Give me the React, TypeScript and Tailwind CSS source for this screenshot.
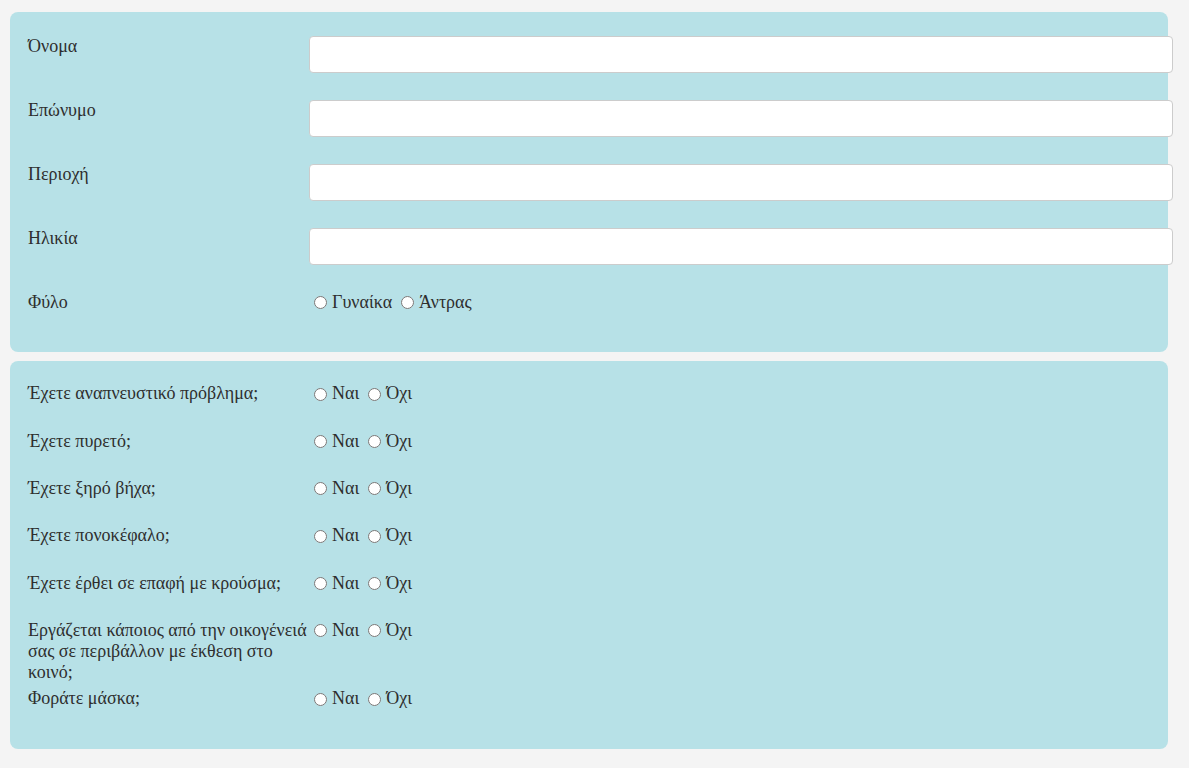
import React from "react";

const serif = { fontFamily: '"Liberation Serif", "Times New Roman", serif' };

function Radio({
  name,
  label,
  first,
}: {
  name: string;
  label: string;
  first?: boolean;
}) {
  return (
    <label className="inline-flex items-center">
      <input
        type="radio"
        name={name}
        className={
          (first ? "ml-[5px]" : "ml-[9px]") +
          " mt-[1px] h-[13px] w-[13px] shrink-0"
        }
      />
      <span className="ml-[5px]">{label}</span>
    </label>
  );
}

const textFields = ["Όνομα", "Επώνυμο", "Περιοχή", "Ηλικία"];

const questions = [
  "Έχετε αναπνευστικό πρόβλημα;",
  "Έχετε πυρετό;",
  "Έχετε ξηρό βήχα;",
  "Έχετε πονοκέφαλο;",
  "Έχετε έρθει σε επαφή με κρούσμα;",
  "Εργάζεται κάποιος από την οικογένειά σας σε περιβάλλον με έκθεση στο κοινό;",
  "Φοράτε μάσκα;",
];

export default function App() {
  return (
    <div
      className="min-h-[768px] w-full bg-[#f4f4f4] pt-[12px] text-[18px] leading-[1.15] text-[#2e2e2e]"
      style={serif}
    >
      {/* personal details */}
      <div className="ml-[10px] w-[1158px] rounded-[8px] bg-[#b7e1e7] pl-[18px] pt-[24px] pb-[39px]">
        {textFields.map((f) => (
          <div key={f} className="mb-[27px] flex items-start">
            <div className="w-[281px] shrink-0">{f}</div>
            <input
              type="text"
              className="h-[37px] w-[864px] shrink-0 rounded-[4px] border border-[#cccccc] bg-white px-3"
            />
          </div>
        ))}
        <div className="flex items-start">
          <div className="w-[281px] shrink-0">Φύλο</div>
          <div className="flex items-center">
            <Radio name="gender" label="Γυναίκα" first />
            <Radio name="gender" label="Άντρας" />
          </div>
        </div>
      </div>

      {/* symptoms questionnaire */}
      <div className="ml-[10px] mt-[9px] w-[1158px] rounded-[8px] bg-[#b7e1e7] pl-[18px] pt-[22.5px] pb-[13px]">
        {questions.map((q, i) => (
          <div key={q} className="flex items-start">
            <div className="w-[281px] shrink-0 pb-[6px]">{q}</div>
            <div className="flex h-[47.4px] items-start">
              <Radio name={`q${i}`} label="Ναι" first />
              <Radio name={`q${i}`} label="Όχι" />
            </div>
          </div>
        ))}
      </div>
    </div>
  );
}
